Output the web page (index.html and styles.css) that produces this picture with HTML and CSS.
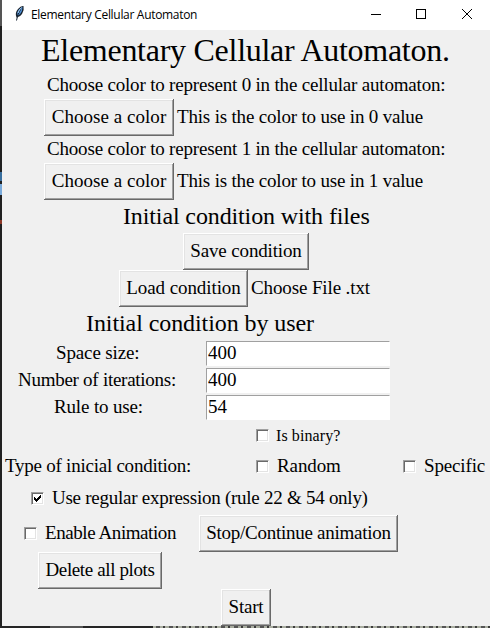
FILE: index.html
```html
<!DOCTYPE html>
<html lang="en">
<head>
<meta charset="utf-8">
<title>Elementary Cellular Automaton</title>
<link rel="stylesheet" href="styles.css">
</head>
<body>
<div class="desktop">
<div class="edge"></div>
<main class="window">
  <header class="titlebar">
    <svg class="feather" width="12" height="16" viewBox="0 0 12 16"><path d="M2.500 12.500Q0.500 8 4 4Q7 .5 9.500 1Q10.500 5 8 9Q6 12 3 12.500Z" fill="#18232f"/><path d="M3.200 10.500Q2.500 7 5 4.500Q7.500 2 8.500 2Q8.500 6 6.500 8.500Q5 10.500 3.200 10.500Z" fill="#4b8cd2"/><path d="M2.500 15.500Q3 10 7 3.500" fill="none" stroke="#142333"/><path d="M4 8Q5 5 7.500 2.500" fill="none" stroke="#a6cff5"/></svg>
    <span class="caption">Elementary Cellular Automaton</span>
    <svg class="controls" width="106" height="12" viewBox="0 0 106 12" fill="none" stroke="#000" shape-rendering="crispEdges"><path d="M1 6.500H11"/><rect x="46.500" y="1.500" width="9" height="9"/><path d="M92 1L102 11M102 1L92 11" shape-rendering="auto"/></svg>
  </header>
  <h1>Elementary Cellular Automaton.</h1>
  <div class="row label first"><span class="choose">Choose color to represent 0 in the cellular automaton:</span></div>
  <div class="row color-row"><button class="color">Choose a color</button><span class="hint">This is the color to use in 0 value</span></div>
  <div class="row label second"><span class="choose">Choose color to represent 1 in the cellular automaton:</span></div>
  <div class="row color-row"><button class="color">Choose a color</button><span class="hint">This is the color to use in 1 value</span></div>
  <h2 class="files">Initial condition with files</h2>
  <div class="row save-row"><button class="save">Save condition</button></div>
  <div class="row load-row"><button class="load">Load condition</button><span class="choose-file">Choose File .txt</span></div>
  <h2 class="user">Initial condition by user</h2>
  <div class="fields">
    <label for="size" class="size">Space size:</label><input id="size" value="400">
    <label for="iterations" class="iterations">Number of iterations:</label><input id="iterations" value="400">
    <label for="rule" class="rule">Rule to use:</label><input id="rule" value="54">
  </div>
  <div class="row binary-row"><i class="box"></i><span class="binary">Is binary?</span></div>
  <div class="row type-row"><span class="type">Type of inicial condition:</span><i class="box"></i><span class="random">Random</span><i class="box"></i><span class="specific">Specific</span></div>
  <div class="row regex-row"><i class="box"><svg width="9" height="9" viewBox="0 0 9 9" shape-rendering="crispEdges"><path d="M1 3h1v1h1v1h1v-1h1v-1h1v-1h1v-1h1v3h-1v1h-1v1h-1v1h-1v1h-1v-1h-1v-1h-1z"/></svg></i><span class="regex">Use regular expression (rule 22 &amp; 54 only)</span></div>
  <div class="row animation-row"><i class="box"></i><span class="enable">Enable Animation</span><button class="stop">Stop/Continue animation</button></div>
  <div class="row delete-row"><button class="delete">Delete all plots</button></div>
  <div class="row start-row"><button class="start">Start</button></div>
</main>
<footer class="under"></footer>
</div>
</body>
</html>
```
FILE: styles.css
```css
* { box-sizing: border-box; }
body { margin: 0; overflow: hidden; color: #000; font: 19px/22px "Liberation Serif", serif; }
.desktop { display: grid; grid-template: 626px 2px / 2px 488px; width: 490px; height: 628px; }
.edge { background: linear-gradient(#555 0 26px, #202020 26px 172px, #386f9f 172px 181px, #202020 181px 184px, #79aadb 184px 195px, #202020 195px 220px, #8c3827 220px 224px, #202020 224px); }
.window { background: #f0f0f0; overflow: hidden; }
.under { grid-column: 1 / 3; background: linear-gradient(90deg, #252525 0 50px, #555 50px 83px, #252525 83px 153px, transparent 153px), repeating-linear-gradient(90deg, #555 0 4px, #a9ada0 4px 7px, #3c3c3c 7px 9px, #a9ada0 9px 13px); }
.titlebar { display: flex; align-items: center; height: 30px; padding-left: 12px; background: #fff; font: 12px/16px "Open Sans", sans-serif; }
.feather { margin-top: -4px; }
.caption { margin-left: 5px; white-space: nowrap; width: 339px; letter-spacing: -.31px; }
.controls { margin-top: -2px; margin-left: 0; }
h1, h2 { margin: 0; font-weight: 400; white-space: nowrap; }
h1 { height: 43px; padding-left: 39px; font-size: 32px; line-height: 40px; letter-spacing: -.27px; }
h2 { font-size: 24px; line-height: 33px; height: 33px; }
.row { display: flex; align-items: center; white-space: nowrap; }
.row span { padding-bottom: 2px; }
.label { height: 26px; padding-left: 45px; }
.second { height: 27px; }
.choose { letter-spacing: -.185px; }
.color-row { height: 37px; padding-left: 42px; }
button { height: 37px; padding: 0 0 2px; margin: 0; flex: none; border: 0; background: #f0f0f0; box-shadow: inset -1px -1px #696969, inset 1px 1px #fff, inset -2px -2px #a0a0a0, inset 2px 2px #e3e3e3; color: #000; font: inherit; white-space: nowrap; }
.color { width: 130px; letter-spacing: .04px; }
.hint { margin-left: 3px; letter-spacing: -.18px; }
.files { padding-left: 121px; letter-spacing: -.12px; }
.save-row { padding-left: 181px; }
.save { width: 126px; letter-spacing: -.15px; }
.load-row { padding-left: 117px; }
.load { width: 129px; letter-spacing: -.08px; }
.choose-file { margin-left: 3px; letter-spacing: -.12px; }
.user { padding-left: 84px; height: 34px; letter-spacing: -.08px; }
.fields { display: grid; grid-template-columns: 204px 184px; grid-auto-rows: 25px; row-gap: 2px; }
.fields label { white-space: nowrap; line-height: 24px; }
.size { padding-left: 54px; letter-spacing: -.13px; }
.iterations { padding-left: 16px; letter-spacing: -.27px; }
.rule { padding-left: 52px; letter-spacing: -.15px; }
input { width: 184px; height: 25px; padding: 0 1px 2px; border: 1px solid; border-color: #a0a0a0 #fff #fff #a0a0a0; border-radius: 0; background: #fff; color: #000; font: inherit; outline: 0; }
.box { display: block; flex: none; width: 13px; height: 13px; background: #fff; border: 1px solid; border-color: #a0a0a0 #fff #fff #a0a0a0; box-shadow: inset 1px 1px #696969, inset -1px -1px #e3e3e3; padding: 1px; }
.box svg { display: block; }
.binary-row { height: 31px; padding-left: 254px; font-size: 16px; }
.binary-row .binary { margin-left: 7px; padding: 0; letter-spacing: .1px; }
.type-row { height: 31px; padding-left: 3px; }
.type { width: 251px; letter-spacing: -.24px; }
.random { margin-left: 8px; width: 126px; letter-spacing: -.1px; }
.specific { margin-left: 8px; letter-spacing: -.15px; }
.regex-row { height: 33px; padding-left: 29px; }
.regex { margin-left: 8px; letter-spacing: -.26px; }
.animation-row { height: 37px; padding-left: 22px; }
.enable { margin-left: 8px; width: 154px; letter-spacing: -.42px; }
.stop { width: 199px; letter-spacing: -.26px; }
.delete-row { padding-left: 36px; }
.delete { width: 124px; letter-spacing: -.38px; }
.start-row { padding-left: 219px; }
.start { width: 50px; letter-spacing: -.2px; }
```
